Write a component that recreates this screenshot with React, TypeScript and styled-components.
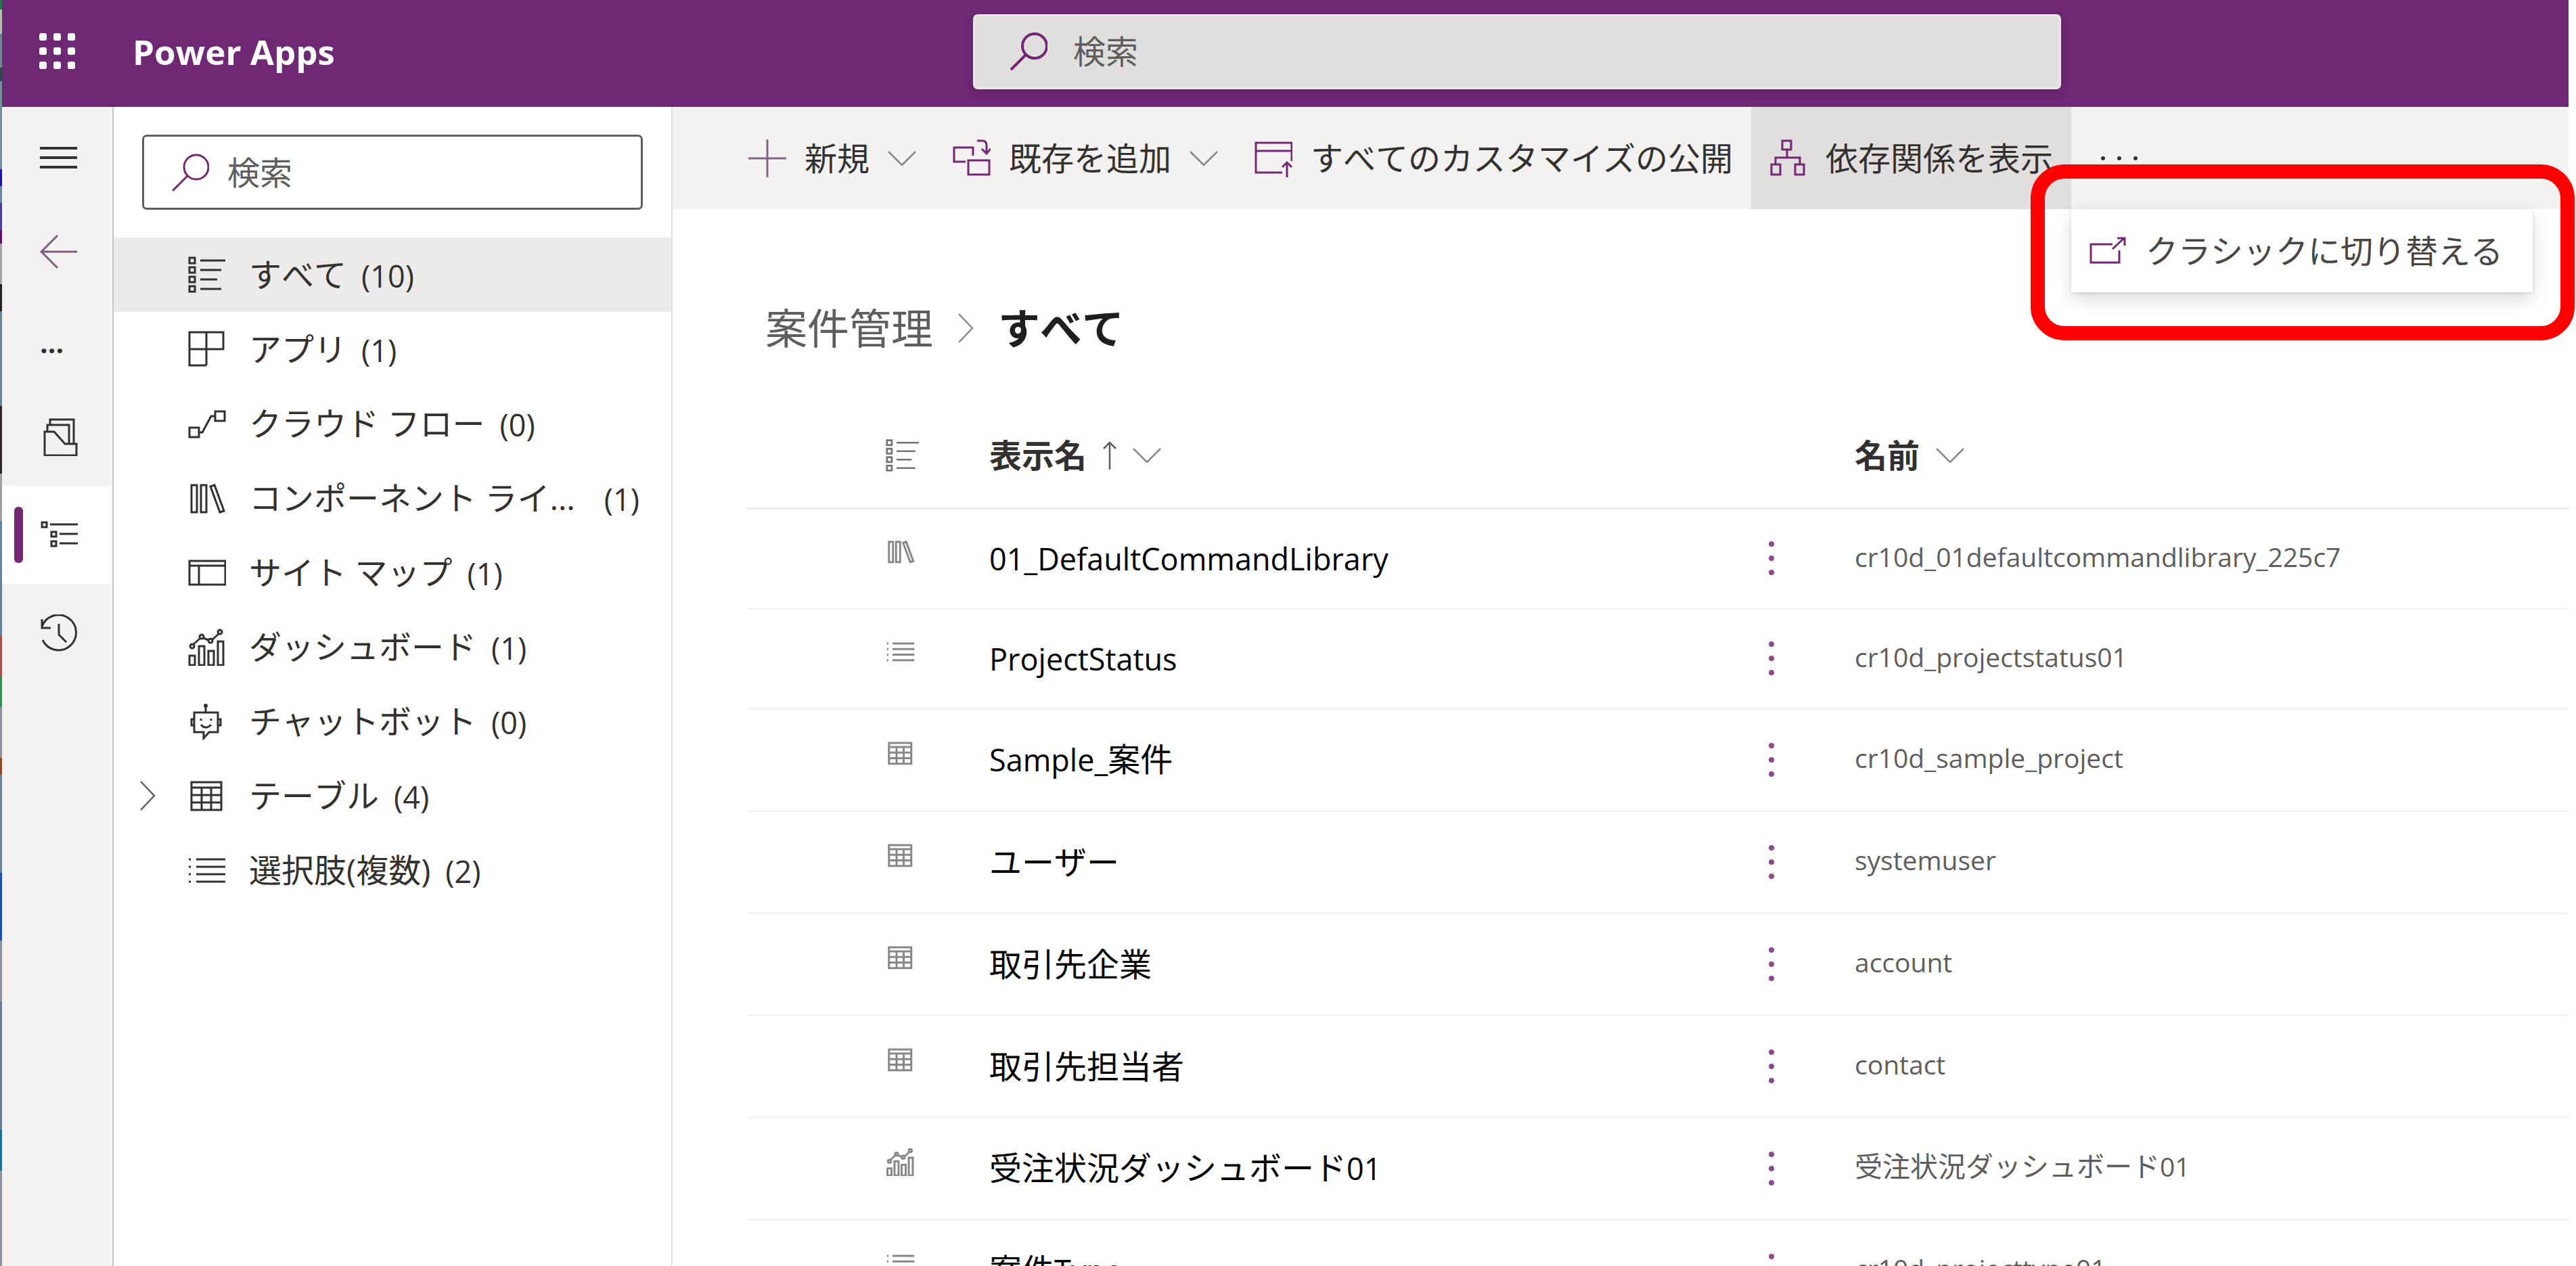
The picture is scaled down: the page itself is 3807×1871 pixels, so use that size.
import React from 'react';
import styled, { createGlobalStyle } from 'styled-components';

const color = {
  brand: '#742774',
  header: '#6f2874',
  rail: '#f3f2f1',
  hover: '#e1dfdd',
  selected: '#edebe9',
  text: '#323130',
  subtle: '#605e5c',
  faint: '#8a8886',
};

const GlobalStyle = createGlobalStyle`
  *, *::before, *::after { box-sizing: border-box; }
  body {
    margin: 0;
    overflow: hidden;
    background: #fff;
    color: ${color.text};
    font-family: "Open Sans", "Noto Sans CJK JP", sans-serif;
    font-size: 48px;
    font-kerning: none;
    line-height: 64px;
  }
  button, input { font: inherit; font-kerning: inherit; color: inherit; }
  button { border: 0; padding: 0; background: none; text-align: left; white-space: nowrap; }
`;

/* ---------- icons ---------- */

const Svg = styled.svg<{ $tone?: string }>`
  display: block;
  flex: none;
  fill: none;
  stroke: currentColor;
  color: ${(p) => p.$tone ?? 'inherit'};
`;

const shapes: Record<string, React.ReactNode> = {
  all: (
    <>
      {[7, 21, 35, 49].map((y) => (
        <rect key={y} x="2" y={y - 4} width="8" height="8" />
      ))}
      <path d="M18 7h37M18 21h31M18 35h25M18 49h31" />
    </>
  ),
  app: <path d="M2 3h50v25H2zM27 3v49M2 28v24h25" />,
  flow: (
    <>
      <rect x="2" y="34" width="14" height="14" />
      <rect x="40" y="10" width="14" height="14" />
      <path d="M16 41h5L34 17h6" />
    </>
  ),
  library: <path d="M5 9h8v40H5zM19 9h8v40h-8zM33 11l6-2 14 38-6 2z" />,
  sitemap: <path d="M2 11h53v35H2zM2 18h53M16 18v28" />,
  dashboard: (
    <>
      <path d="M2 41h8v14H2zM16 27h8v28h-8zM30 34h8v21h-8zM44 20h8v35h-8z" />
      <path d="M8 24l9-8M23 15l7 3M36 17l9-8" />
      <circle cx="6" cy="27" r="3" />
      <circle cx="20" cy="13" r="3" />
      <circle cx="33" cy="19" r="3" />
      <circle cx="47" cy="6" r="3" />
    </>
  ),
  bot: (
    <>
      <path d="M9 15h35v29H31l-8 9v-9H9zM26 15V6M9 25H5v9h4M44 25h4v9h-4M19 33q7 8 15 0" />
      <circle cx="26" cy="5" r="1.5" />
      <path d="M19 24v3M34 24v3" />
    </>
  ),
  table: <path d="M5 8h44v41H5zM5 16h44M5 27h44M5 38h44M20 16v33M34 16v33" />,
  list: <path d="M12 12h43M12 23h43M12 34h43M12 45h43M1 12h3M1 23h3M1 34h3M1 45h3" />,
  search: (
    <>
      <circle cx="37" cy="20" r="18" />
      <path d="M24 33L2 55" />
    </>
  ),
  menu: <path d="M0 14h55M0 28h55M0 42h55" />,
  back: <path d="M26 4L2 28l24 24M2 28h53" />,
  solutions: (
    <path d="M7 20h14l16 18h17v17H7zM11 20V10h32v28M15 10V2h35v36" />
  ),
  tree: (
    <>
      <rect x="3" y="9" width="7" height="7" />
      <rect x="17" y="23" width="7" height="7" />
      <rect x="17" y="37" width="7" height="7" />
      <path d="M15 12h41M29 26h27M29 40h27" />
    </>
  ),
  history: <path d="M3 18A26 26 0 1 1 4 38M3 7v13h13M28 14v16l11 11" />,
  plus: <path d="M28 0v56M0 28h56" />,
  addExisting: (
    <path d="M19 33H2V12h28v12M23 31h31v21H23zM36 2h8q6 0 6 7v12M43 14l7 7 6-7" />
  ),
  publish: <path d="M41 49H2V5h53v27M2 17h53M48 56V34M41 41l7-7 7 7" />,
  depend: (
    <path d="M19 2h13v13H19zM26 15v12M9 37V27h36v10M3 37h13v15H3zM38 37h13v15H38z" />
  ),
  open: <path d="M34 18H2v27h42V27M34 25L51 9M41 9h11v11" />,
};

type IconProps = { name: string; size?: number; weight?: number; tone?: string };

const Icon = ({ name, size = 56, weight = 3, tone }: IconProps) => (
  <Svg $tone={tone} width={size} height={size} viewBox="0 0 56 56" strokeWidth={weight} aria-hidden>
    {shapes[name]}
  </Svg>
);

const ChevronDown = () => (
  <Svg $tone={color.faint} width="42" height="22" viewBox="0 0 42 22" strokeWidth="2.5" aria-hidden>
    <path d="M1 1l20 20L41 1" />
  </Svg>
);

const ChevronRight = ({ tone = color.subtle }: { tone?: string }) => (
  <Svg $tone={tone} width="24" height="44" viewBox="0 0 24 44" strokeWidth="2.5" aria-hidden>
    <path d="M2 1l20 21L2 43" />
  </Svg>
);

const ArrowUp = () => (
  <Svg $tone={color.subtle} width="20" height="42" viewBox="0 0 20 42" strokeWidth="2.5" aria-hidden>
    <path d="M10 42V2M1 11l9-9 9 9" />
  </Svg>
);

const Dots = ({ vertical = false, size = 6 }: { vertical?: boolean; size?: number }) => (
  <Svg width="56" height="56" viewBox="0 0 56 56" aria-hidden>
    {[-1, 0, 1].map((i) => (
      <circle
        key={i}
        cx={vertical ? 28 : 28 + i * 24}
        cy={vertical ? 28 + i * 21 : 28}
        r={size / 2}
        fill="currentColor"
        stroke="none"
      />
    ))}
  </Svg>
);

const Waffle = () => (
  <Svg width="56" height="56" viewBox="0 0 56 56" aria-hidden>
    {[0, 1, 2].map((r) =>
      [0, 1, 2].map((c) => (
        <rect key={`${r}${c}`} x={1 + c * 21} y={1 + r * 21} width="11" height="11" rx="3" fill="currentColor" stroke="none" />
      )),
    )}
  </Svg>
);

/* ---------- frame ---------- */

const Screen = styled.div`
  display: flex;
  height: 100vh;
`;

const DesktopEdge = styled.div`
  flex: none;
  width: 3px;
  background: linear-gradient(
    #1f7a45 0 14px, #b9bdb4 14px 50px, #6f8a94 50px 100px, #2c4a4e 100px 120px,
    #7591a0 120px 250px, #1c14a0 250px 275px, #6b87a0 275px 300px, #4a3f9c 300px 340px,
    #5a1466 340px 360px, #a8a4a2 360px 420px, #222 420px 460px, #6c8498 460px 600px,
    #2b2524 600px 700px, #a39f9d 700px 770px, #67839a 770px 940px, #a84f49 940px 1000px,
    #3a8a58 1000px 1045px, #8f9299 1045px 1120px, #8a4a22 1120px 1145px, #6c8498 1145px 1290px,
    #1d4fae 1290px 1390px, #8d939b 1390px 1480px, #6c7f92 1480px 1670px, #1b6f99 1670px 1730px,
    #8d939b 1730px
  );
`;

const Shell = styled.div`
  flex: 1;
  min-width: 0;
  display: flex;
  flex-direction: column;
  margin-right: 11px;
`;

const Header = styled.header`
  flex: none;
  display: flex;
  align-items: center;
  height: 158px;
  padding: 0 750px 6px 54px;
  background: ${color.header};
  color: #fff;
`;

const Brand = styled.div`
  flex: none;
  display: flex;
  align-items: center;
  gap: 83px;
  width: 1381px;
  font-size: 51px;
  font-weight: 700;
`;

const SearchField = styled.label<{ $filled?: boolean }>`
  flex: 1;
  min-width: 0;
  display: flex;
  align-items: center;
  gap: ${(p) => (p.$filled ? 38 : 27)}px;
  height: 111px;
  padding: 0 ${(p) => (p.$filled ? 51 : 40)}px;
  border: 3px solid ${(p) => (p.$filled ? '#e9e8e2' : color.subtle)};
  border-radius: 7px;
  background: ${(p) => (p.$filled ? color.hover : '#fff')};
  color: ${color.brand};
  box-shadow: ${(p) => (p.$filled ? '0 6px 12px rgba(0, 0, 0, 0.15)' : 'none')};
`;

const SearchInput = styled.input`
  flex: 1;
  min-width: 0;
  height: 64px;
  border: 0;
  padding: 0;
  outline: 0;
  background: none;
  color: ${color.subtle};
  &::placeholder { color: ${color.subtle}; opacity: 1; }
`;

const Body = styled.div`
  flex: 1;
  min-height: 0;
  display: flex;
`;

/* ---------- rail ---------- */

const Rail = styled.nav`
  flex: none;
  width: 165px;
  padding-top: 2px;
  border-right: 2px solid #c8c6c4;
  background: ${color.rail};
`;

const RailButton = styled.button<{ $active?: boolean; $short?: boolean }>`
  position: relative;
  display: flex;
  align-items: center;
  width: 100%;
  height: ${(p) => (p.$short ? 134 : 145)}px;
  padding-left: 56px;
  background: ${(p) => (p.$active ? '#fff' : 'transparent')};
  &::before {
    content: '';
    display: ${(p) => (p.$active ? 'block' : 'none')};
    position: absolute;
    left: 18px;
    width: 13px;
    height: 83px;
    border-radius: 6px;
    background: ${color.brand};
  }
`;

const Ellipsis = styled.span`
  font-size: 41px;
  font-weight: 700;
`;

/* ---------- solution tree ---------- */

const Side = styled.aside`
  flex: none;
  width: 826px;
  border-right: 2px solid ${color.hover};
`;

const SideSearch = styled.div`
  display: flex;
  padding: 41px 42px;
`;

const Tree = styled.ul`
  margin: 0;
  padding: 0;
  list-style: none;
`;

const TreeItem = styled.button<{ $active?: boolean }>`
  display: grid;
  grid-template-columns: 72px 56px minmax(0, max-content) max-content;
  align-items: center;
  width: 100%;
  height: 110px;
  padding: 0 47px 0 38px;
  background: ${(p) => (p.$active ? color.selected : 'transparent')};
`;

const TreeLabel = styled.span`
  padding-left: 34px;
  overflow: hidden;
  text-overflow: ellipsis;
`;

const TreeCount = styled.span`
  padding: 4px 0 0 22px;
  font-size: 45px;
`;

/* ---------- main ---------- */

const Main = styled.main`
  flex: 1;
  min-width: 0;
`;

const CommandBar = styled.div`
  display: flex;
  height: 151px;
  padding-left: 85px;
  background: ${color.rail};
`;

const Command = styled.button<{ $active?: boolean }>`
  display: flex;
  align-items: center;
  gap: 27px;
  padding: 0 27px;
  background: ${(p) => (p.$active ? color.hover : 'transparent')};
`;

const Overflow = styled.div`
  position: relative;
  display: flex;
`;

const OverflowButton = styled.button`
  padding: 0 43px;
`;

const Menu = styled.div`
  position: absolute;
  top: 100%;
  left: 0;
  background: #fff;
  box-shadow: 0 11px 25px rgba(0, 0, 0, 0.13), 0 2px 6px rgba(0, 0, 0, 0.11);
`;

const MenuItem = styled.button`
  display: flex;
  align-items: center;
  gap: 27px;
  height: 123px;
  padding: 0 44px 0 27px;
  color: #484644;
`;

const Highlight = styled.div`
  position: absolute;
  inset: -66px -62px -71px -60px;
  border: 21px solid #f00;
  border-radius: 50px;
  pointer-events: none;
`;

const Breadcrumb = styled.nav`
  display: flex;
  align-items: center;
  gap: 36px;
  padding: 143px 0 77px 137px;
  font-size: 62px;
  line-height: 66px;
`;

const Crumb = styled.a`
  color: ${color.subtle};
  text-decoration: none;
`;

const Current = styled.strong`
  color: #201f1e;
  font-weight: 600;
`;

const Grid = styled.table`
  width: calc(100% - 110px);
  margin-left: 110px;
  border-collapse: collapse;
  table-layout: fixed;
`;

const Col = styled.col<{ $width?: number }>`
  width: ${(p) => (p.$width ? `${p.$width}px` : 'auto')};
`;

const HeadCell = styled.th`
  height: 156px;
  padding: 2px 0 0;
  border-bottom: 3px solid ${color.selected};
  text-align: left;
`;

const HeadButton = styled.button<{ $inset?: boolean }>`
  display: flex;
  align-items: center;
  gap: 24px;
  padding-left: ${(p) => (p.$inset ? 205 : 0)}px;
  font-weight: 600;
`;

const Row = styled.tr<{ $latin: boolean }>`
  height: ${(p) => (p.$latin ? 148 : 151)}px;
  border-bottom: 3px solid ${color.rail};
`;

const IconCell = styled.td`
  padding: 0 0 20px 206px;
`;

const NameCell = styled.td`
  padding: 0;
  color: #000;
`;

const MoreCell = styled.td`
  padding: 0 0 0 30px;
  color: #8b4a8b;
`;

const MoreButton = styled.button`
  display: block;
`;

const IdCell = styled.td`
  padding: 0 0 6px;
  color: ${color.subtle};
  font-size: 41px;
`;

const Latin = styled.span<{ $size: number }>`
  font-size: ${(p) => p.$size}px;
`;

const tree = [
  { icon: 'all', label: 'すべて', count: 10 },
  { icon: 'app', label: 'アプリ', count: 1 },
  { icon: 'flow', label: 'クラウド フロー', count: 0 },
  { icon: 'library', label: 'コンポーネント ライブラリ', count: 1 },
  { icon: 'sitemap', label: 'サイト マップ', count: 1 },
  { icon: 'dashboard', label: 'ダッシュボード', count: 1 },
  { icon: 'bot', label: 'チャットボット', count: 0 },
  { icon: 'table', label: 'テーブル', count: 4, expandable: true },
  { icon: 'list', label: '選択肢(複数)', count: 2 },
];

const rows = [
  { icon: 'library', name: '01_DefaultCommandLibrary', id: 'cr10d_01defaultcommandlibrary_225c7' },
  { icon: 'list', name: 'ProjectStatus', id: 'cr10d_projectstatus01' },
  { icon: 'table', name: 'Sample_案件', id: 'cr10d_sample_project' },
  { icon: 'table', name: 'ユーザー', id: 'systemuser' },
  { icon: 'table', name: '取引先企業', id: 'account' },
  { icon: 'table', name: '取引先担当者', id: 'contact' },
  { icon: 'dashboard', name: '受注状況ダッシュボード01', id: '受注状況ダッシュボード01' },
  { icon: 'list', name: '案件Type', id: 'cr10d_projecttype01' },
];

const isLatin = (s: string) => /^[\x20-\x7e]+$/.test(s);

/* Latin runs are set slightly smaller than the Japanese text around them. */
const MixedText = ({ text, latinSize }: { text: string; latinSize: number }) => (
  <>
    {text
      .split(/([\x20-\x7e]+)/)
      .filter(Boolean)
      .map((part, i) => (isLatin(part) ? <Latin key={i} $size={latinSize}>{part}</Latin> : part))}
  </>
);

export default function App() {
  return (
    <>
      <GlobalStyle />
      <Screen>
        <DesktopEdge />
        <Shell>
          <Header>
            <Brand>
              <button aria-label="アプリ起動ツール"><Waffle /></button>
              <span>Power Apps</span>
            </Brand>
            <SearchField $filled>
              <Icon name="search" weight={4} />
              <SearchInput aria-label="検索" placeholder="検索" />
            </SearchField>
          </Header>
          <Body>
            <Rail>
              <RailButton aria-label="メニュー"><Icon name="menu" weight={4} /></RailButton>
              <RailButton $short aria-label="戻る"><Icon name="back" tone="#7d5b80" /></RailButton>
              <RailButton $short aria-label="その他"><Ellipsis>...</Ellipsis></RailButton>
              <RailButton aria-label="ソリューション"><Icon name="solutions" /></RailButton>
              <RailButton $active aria-label="オブジェクト"><Icon name="tree" /></RailButton>
              <RailButton aria-label="履歴"><Icon name="history" /></RailButton>
            </Rail>
            <Side>
              <SideSearch>
                <SearchField>
                  <Icon name="search" />
                  <SearchInput aria-label="オブジェクトの検索" placeholder="検索" />
                </SearchField>
              </SideSearch>
              <Tree>
                {tree.map((t, i) => (
                  <li key={t.label}>
                    <TreeItem $active={i === 0}>
                      <span>{t.expandable && <ChevronRight />}</span>
                      <Icon name={t.icon} />
                      <TreeLabel>{t.label}</TreeLabel>
                      <TreeCount>({t.count})</TreeCount>
                    </TreeItem>
                  </li>
                ))}
              </Tree>
            </Side>
            <Main>
              <CommandBar>
                <Command><Icon name="plus" tone="#85628a" />新規<ChevronDown /></Command>
                <Command><Icon name="addExisting" tone={color.brand} />既存を追加<ChevronDown /></Command>
                <Command><Icon name="publish" tone={color.brand} />すべてのカスタマイズの公開</Command>
                <Command $active><Icon name="depend" tone={color.brand} />依存関係を表示</Command>
                <Overflow>
                  <OverflowButton aria-label="その他のコマンド"><Dots /></OverflowButton>
                  <Menu>
                    <MenuItem><Icon name="open" tone={color.brand} />クラシックに切り替える</MenuItem>
                    <Highlight />
                  </Menu>
                </Overflow>
              </CommandBar>
              <Breadcrumb>
                <Crumb href="#">案件管理</Crumb>
                <ChevronRight tone={color.faint} />
                <Current>すべて</Current>
              </Breadcrumb>
              <Grid>
                <colgroup>
                  <Col $width={358} />
                  <Col $width={1098} />
                  <Col $width={181} />
                  <Col />
                </colgroup>
                <thead>
                  <tr>
                    <HeadCell>
                      <HeadButton $inset aria-label="種類"><Icon name="all" size={50} tone="#6f7472" /></HeadButton>
                    </HeadCell>
                    <HeadCell><HeadButton>表示名<ArrowUp /><ChevronDown /></HeadButton></HeadCell>
                    <HeadCell />
                    <HeadCell><HeadButton>名前<ChevronDown /></HeadButton></HeadCell>
                  </tr>
                </thead>
                <tbody>
                  {rows.map((r) => (
                    <Row key={r.name} $latin={isLatin(r.name)}>
                      <IconCell><Icon name={r.icon} size={42} tone={color.faint} weight={4} /></IconCell>
                      <NameCell><MixedText text={r.name} latinSize={45} /></NameCell>
                      <MoreCell><MoreButton aria-label="その他の操作"><Dots vertical size={8} /></MoreButton></MoreCell>
                      <IdCell><MixedText text={r.id} latinSize={39} /></IdCell>
                    </Row>
                  ))}
                </tbody>
              </Grid>
            </Main>
          </Body>
        </Shell>
      </Screen>
    </>
  );
}
